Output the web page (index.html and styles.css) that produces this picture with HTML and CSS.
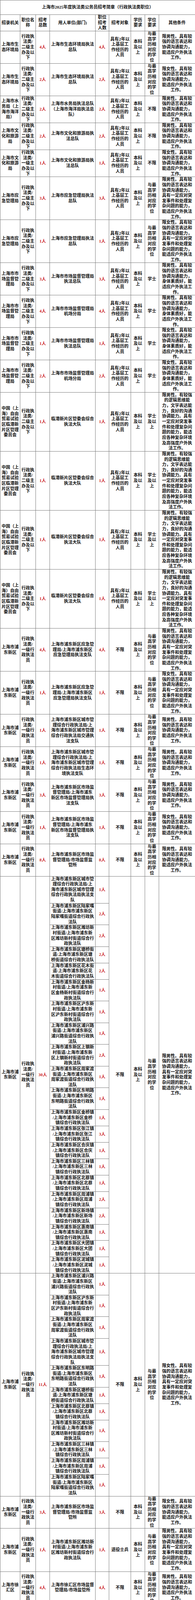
FILE: index.html
```html
<!DOCTYPE html>
<html lang="zh-CN">
<head>
<meta charset="utf-8">
<title>上海市2025年度执法类公务员招考简章（行政执法类职位）</title>
<link rel="stylesheet" href="styles.css">
</head>
<body>
<table class="sheet">
<colgroup>
<col class="c1"><col class="c2"><col class="c3"><col class="c4"><col class="c5"><col class="c6"><col class="c7"><col class="c8"><col class="c9">
</colgroup>
<tbody>
<tr class="title"><td colspan="9">上海市2025年度执法类公务员招考简章（行政执法类职位）</td></tr>
<tr><td>招录机关</td><td>职位名<br>称</td><td>招考<br>总数</td><td>用人单位(部门)</td><td>职位<br>招考<br>人数</td><td>招考对象</td><td>学历<br>要求</td><td>学位<br>要求</td><td>其他条件</td></tr>

<tr><td>上海市生<br>态环境局</td><td>行政执<br>法类/<br>二级主<br>办及以<br>下</td><td class="n">4人</td><td>上海市生态环境局执法<br>总队</td><td class="n">4人</td><td>具有2年以<br>上基层工<br>作经历的<br>人员</td><td>本科<br>及以<br>上</td><td>与最<br>高学<br>历相<br>对应<br>的学<br>位</td><td>限男性。具有较<br>强的语言表达和<br>协调沟通能力，<br>能适应户外执法<br>工作。</td></tr>

<tr><td>上海市生<br>态环境局</td><td>行政执<br>法类/<br>二级主<br>办及以<br>下</td><td class="n">2人</td><td>上海市生态环境局执法<br>总队</td><td class="n">2人</td><td>具有2年以<br>上基层工<br>作经历的<br>人员</td><td>本科<br>及以<br>上</td><td>与最<br>高学<br>历相<br>对应<br>的学<br>位</td><td>限女性。具有较<br>强的语言表达和<br>协调沟通能力，<br>能适应户外执法<br>工作。</td></tr>

<tr><td>上海市水<br>务局（上<br>海市海洋<br>局）</td><td>行政执<br>法类/<br>二级主<br>办及以<br>下</td><td class="n">2人</td><td>上海市水务局执法总队<br>（上海市海洋局执法总<br>队）</td><td class="n">2人</td><td>具有2年以<br>上基层工<br>作经历的<br>人员</td><td>本科<br>及以<br>上</td><td>不限</td><td>限男性。具有较<br>强的语言表达和<br>协调沟通能力，<br>能适应户外执法<br>工作。</td></tr>

<tr><td>上海市文<br>化和旅游<br>局</td><td>行政执<br>法类/<br>二级主<br>办及以<br>下</td><td class="n">2人</td><td>上海市文化和旅游局执<br>法总队</td><td class="n">2人</td><td>具有2年以<br>上基层工<br>作经历的<br>人员</td><td>本科<br>及以<br>上</td><td>不限</td><td>限男性。具有较<br>强的语言表达和<br>协调沟通能力，<br>能适应户外执法<br>工作。</td></tr>

<tr><td>上海市文<br>化和旅游<br>局</td><td>行政执<br>法类/<br>一级主<br>办及以<br>下</td><td class="n">1人</td><td>上海市文化和旅游局执<br>法总队</td><td class="n">1人</td><td>具有2年以<br>上基层工<br>作经历的<br>人员</td><td>本科<br>及以<br>上</td><td>不限</td><td>限女性。具有较<br>强的语言表达和<br>协调沟通能力，<br>能适应户外执法<br>工作。</td></tr>

<tr><td>上海市应<br>急管理局</td><td>行政执<br>法类/<br>二级主<br>办及以<br>下</td><td class="n">3人</td><td>上海市应急管理局执法<br>总队</td><td class="n">3人</td><td>具有2年以<br>上基层工<br>作经历的<br>人员</td><td>本科<br>及以<br>上</td><td>与最<br>高学<br>历相<br>对应<br>的学<br>位</td><td>限男性。具有较<br>强的语言表达和<br>协调沟通能力，<br>具有一定应对突<br>发事件和处理复<br>杂问题的能力，<br>能适应户外执法<br>工作。</td></tr>

<tr><td>上海市应<br>急管理局</td><td>行政执<br>法类/<br>二级主<br>办及以<br>下</td><td class="n">1人</td><td>上海市应急管理局执法<br>总队</td><td class="n">1人</td><td>具有2年以<br>上基层工<br>作经历的<br>人员</td><td>本科<br>及以<br>上</td><td>与最<br>高学<br>历相<br>对应<br>的学<br>位</td><td>限女性。具有较<br>强的语言表达和<br>协调沟通能力，<br>具有一定应对突<br>发事件和处理复<br>杂问题的能力，<br>能适应户外执法<br>工作。</td></tr>

<tr><td>上海市市<br>场监督管<br>理局</td><td>行政执<br>法类/<br>二级主<br>办及以<br>下</td><td class="n">3人</td><td>上海市市场监督管理局<br>执法总队</td><td class="n">3人</td><td>具有2年以<br>上基层工<br>作经历的<br>人员</td><td>本科<br>及以<br>上</td><td>学士</td><td>限男性。具有较<br>强的语言表达和<br>协调沟通能力，<br>身体素质好，能<br>适应户外执法工<br>作。</td></tr>

<tr><td>上海市市<br>场监督管<br>理局</td><td>行政执<br>法类/<br>二级主<br>办及以<br>下</td><td class="n">4人</td><td>上海市市场监督管理局<br>机场分局</td><td class="n">4人</td><td>具有2年以<br>上基层工<br>作经历的<br>人员</td><td>本科<br>及以<br>上</td><td>学士</td><td>限男性。具有较<br>强的语言表达和<br>协调沟通能力，<br>身体素质好，能<br>适应户外执法工<br>作。</td></tr>

<tr><td>上海市市<br>场监督管<br>理局</td><td>行政执<br>法类/<br>二级主<br>办及以<br>下</td><td class="n">1人</td><td>上海市市场监督管理局<br>执法总队</td><td class="n">1人</td><td>具有2年以<br>上基层工<br>作经历的<br>人员</td><td>本科<br>及以<br>上</td><td>学士</td><td>限女性。具有较<br>强的语言表达和<br>协调沟通能力，<br>身体素质好，能<br>适应户外执法工<br>作。</td></tr>

<tr><td>上海市市<br>场监督管<br>理局</td><td>行政执<br>法类/<br>二级主<br>办及以<br>下</td><td class="n">2人</td><td>上海市市场监督管理局<br>机场分局</td><td class="n">2人</td><td>具有2年以<br>上基层工<br>作经历的<br>人员</td><td>本科<br>及以<br>上</td><td>学士</td><td>限女性。具有较<br>强的语言表达和<br>协调沟通能力，<br>身体素质好，能<br>适应户外执法工<br>作。</td></tr>

<tr><td>中国（上<br>海）自由<br>贸易试验<br>区临港新<br>片区管理<br>委员会</td><td>行政执<br>法类/<br>二级主<br>办及以<br>下</td><td class="n">1人</td><td>临港新片区管委会综合<br>执法大队</td><td class="n">1人</td><td>具有2年以<br>上基层工<br>作经历的<br>人员</td><td>本科<br>及以<br>上</td><td>学士<br>及以<br>上</td><td>限男性。有较强<br>的逻辑思维能<br>力，文字表达能<br>力，良好的沟通<br>协调能力。具有<br>一定应对突发事<br>件和处理复杂问<br>题的能力，能适<br>应各种复杂环境<br>及高强度户外执<br>法工作。</td></tr>

<tr><td>中国（上<br>海）自由<br>贸易试验<br>区临港新<br>片区管理<br>委员会</td><td>行政执<br>法类/<br>二级主<br>办及以<br>下</td><td class="n">1人</td><td>临港新片区管委会综合<br>执法大队</td><td class="n">1人</td><td>具有2年以<br>上基层工<br>作经历的<br>人员</td><td>本科<br>及以<br>上</td><td>学士<br>及以<br>上</td><td>限男性。有较强<br>的逻辑思维能<br>力，文字表达能<br>力，良好的沟通<br>协调能力。具有<br>一定应对突发事<br>件和处理复杂问<br>题的能力，能适<br>应各种复杂环境<br>及高强度户外执<br>法工作。</td></tr>

<tr><td>中国（上<br>海）自由<br>贸易试验<br>区临港新<br>片区管理<br>委员会</td><td>行政执<br>法类/<br>二级主<br>办及以<br>下</td><td class="n">1人</td><td>临港新片区管委会综合<br>执法大队</td><td class="n">1人</td><td>具有2年以<br>上基层工<br>作经历的<br>人员</td><td>本科<br>及以<br>上</td><td>学士<br>及以<br>上</td><td>限男性。有较强<br>的逻辑思维能<br>力，文字表达能<br>力，良好的沟通<br>协调能力。具有<br>一定应对突发事<br>件和处理复杂问<br>题的能力，能适<br>应各种复杂环境<br>及高强度户外执<br>法工作。</td></tr>

<tr><td>中国（上<br>海）自由<br>贸易试验<br>区临港新<br>片区管理<br>委员会</td><td>行政执<br>法类/<br>二级主<br>办及以<br>下</td><td class="n">1人</td><td>临港新片区管委会综合<br>执法大队</td><td class="n">1人</td><td>具有2年以<br>上基层工<br>作经历的<br>人员</td><td>本科<br>及以<br>上</td><td>学士<br>及以<br>上</td><td>限男性。有较强<br>的逻辑思维能<br>力，文字表达能<br>力，良好的沟通<br>协调能力。具有<br>一定应对突发事<br>件和处理复杂问<br>题的能力，能适<br>应各种复杂环境<br>及高强度户外执<br>法工作。</td></tr>

<tr><td>上海市浦<br>东新区</td><td>行政执<br>法类/<br>一级行<br>政执法<br>员</td><td class="n">4人</td><td>上海市浦东新区应急管<br>理局/上海市浦东新区<br>应急管理局执法支队</td><td class="n">4人</td><td>不限</td><td>本科<br>及以<br>上</td><td>与最<br>高学<br>历相<br>对应<br>的学<br>位</td><td>限男性。具有较<br>强的语言表达和<br>协调沟通能力，<br>具有一定应对突<br>发事件和处理复<br>杂问题的能力，<br>能适应户外执法<br>工作。</td></tr>

<tr><td>上海市浦<br>东新区</td><td>行政执<br>法类/<br>一级行<br>政执法<br>员</td><td class="n">1人</td><td>上海市浦东新区应急管<br>理局/上海市浦东新区<br>应急管理局执法支队</td><td class="n">1人</td><td>不限</td><td>本科<br>及以<br>上</td><td>与最<br>高学<br>历相<br>对应<br>的学<br>位</td><td>限女性。具有较<br>强的语言表达和<br>协调沟通能力，<br>具有一定应对突<br>发事件和处理复<br>杂问题的能力，<br>能适应户外执法<br>工作。</td></tr>

<tr><td>上海市浦<br>东新区</td><td>行政执<br>法类/<br>一级行<br>政执法<br>员</td><td class="n">1人</td><td>上海市浦东新区城市管<br>理综合行政执法局/上<br>海市浦东新区城市管理<br>综合行政执法局交通执<br>法支队</td><td class="n">1人</td><td>不限</td><td>本科<br>及以<br>上</td><td>与最<br>高学<br>历相<br>对应<br>的学<br>位</td><td>限男性。具有较<br>强的语言表达和<br>协调沟通能力，<br>能适应户外执法<br>工作。</td></tr>

<tr><td>上海市浦<br>东新区</td><td>行政执<br>法类/<br>一级行<br>政执法<br>员</td><td class="n">1人</td><td>上海市浦东新区城市管<br>理综合行政执法局/上<br>海市浦东新区城市管理<br>综合行政执法局生态环<br>境执法支队</td><td class="n">1人</td><td>不限</td><td>本科<br>及以<br>上</td><td>与最<br>高学<br>历相<br>对应<br>的学<br>位</td><td>限男性。具有较<br>强的语言表达和<br>协调沟通能力，<br>能适应户外执法<br>工作。</td></tr>

<tr><td>上海市浦<br>东新区</td><td>行政执<br>法类/<br>一级行<br>政执法<br>员</td><td class="n">3人</td><td>上海市浦东新区市场监<br>督管理局/上海市浦东<br>新区市场监督管理局执<br>法支队</td><td class="n">3人</td><td>不限</td><td>本科<br>及以<br>上</td><td>与最<br>高学<br>历相<br>对应<br>的学<br>位</td><td>限男性。具有较<br>强的语言表达和<br>协调沟通能力。<br>能适应户外执法<br>工作。</td></tr>

<tr><td>上海市浦<br>东新区</td><td>行政执<br>法类/<br>一级行<br>政执法<br>员</td><td class="n">1人</td><td>上海市浦东新区市场监<br>督管理局/上海市浦东<br>新区市场监督管理局执<br>法支队</td><td class="n">1人</td><td>不限</td><td>本科<br>及以<br>上</td><td>与最<br>高学<br>历相<br>对应<br>的学<br>位</td><td>限女性。具有较<br>强的语言表达和<br>协调沟通能力。<br>能适应户外执法<br>工作。</td></tr>

<tr><td>上海市浦<br>东新区</td><td>行政执<br>法类/<br>一级行<br>政执法<br>员</td><td class="n">8人</td><td>上海市浦东新区市场监<br>督管理局/市场监督监<br>管所</td><td class="n">8人</td><td>不限</td><td>本科<br>及以<br>上</td><td>与最<br>高学<br>历相<br>对应<br>的学<br>位</td><td>限男性。具有较<br>强的语言表达和<br>协调沟通能力。<br>能适应户外执法<br>工作。</td></tr>

<tr><td rowspan="21">上海市浦<br>东新区</td><td rowspan="21">行政执<br>法类/<br>一级行<br>政执法<br>员</td><td rowspan="21" class="n">30人</td><td>上海市浦东新区城市管<br>理综合行政执法局/上<br>海市浦东新区城市管理<br>综合行政执法局执法支<br>队</td><td class="n">1人</td><td rowspan="21">不限</td><td rowspan="21">本科<br>及以<br>上</td><td rowspan="21">与最<br>高学<br>历相<br>对应<br>的学<br>位</td><td rowspan="21">限男性。具有较<br>强的语言表达和<br>协调沟通能力，<br>具有一定应对突<br>发事件和处理复<br>杂问题的能力，<br>能适应户外执法<br>工作。</td></tr>
<tr><td>上海市浦东新区陆家嘴<br>街道/上海市浦东新区<br>陆家嘴街道综合行政执<br>法队</td><td class="n">2人</td></tr>
<tr><td>上海市浦东新区潍坊新<br>村街道/上海市浦东新<br>区潍坊新村街道综合行<br>政执法队</td><td class="n">2人</td></tr>
<tr><td>上海市浦东新区塘桥街<br>道/上海市浦东新区塘<br>桥街道综合行政执法队</td><td class="n">2人</td></tr>
<tr><td>上海市浦东新区花木街<br>道/上海市浦东新区花<br>木街道综合行政执法队</td><td class="n">2人</td></tr>
<tr><td>上海市浦东新区金杨新<br>村街道/上海市浦东新<br>区金杨新村街道综合行<br>政执法队</td><td class="n">1人</td></tr>
<tr><td>上海市浦东新区沪东新<br>村街道/上海市浦东新<br>区沪东新村街道综合行<br>政执法队</td><td class="n">1人</td></tr>
<tr><td>上海市浦东新区浦兴路<br>街道/上海市浦东新区<br>浦兴路街道综合行政执<br>法队</td><td class="n">1人</td></tr>
<tr><td>上海市浦东新区上钢新<br>村街道/上海市浦东新<br>区上钢新村街道综合行<br>政执法队</td><td class="n">2人</td></tr>
<tr><td>上海市浦东新区周家渡<br>街道/上海市浦东新区<br>周家渡街道综合行政执<br>法队</td><td class="n">1人</td></tr>
<tr><td>上海市浦东新区东明路<br>街道/上海市浦东新区<br>东明路街道综合行政执<br>法队</td><td class="n">1人</td></tr>
<tr><td>上海市浦东新区金桥镇<br>/上海市浦东新区金桥<br>镇综合行政执法队</td><td class="n">1人</td></tr>
<tr><td>上海市浦东新区张江镇<br>/上海市浦东新区张江<br>镇综合行政执法队</td><td class="n">3人</td></tr>
<tr><td>上海市浦东新区合庆镇<br>/上海市浦东新区合庆<br>镇综合行政执法队</td><td class="n">1人</td></tr>
<tr><td>上海市浦东新区三林镇<br>/上海市浦东新区三林<br>镇综合行政执法队</td><td class="n">1人</td></tr>
<tr><td>上海市浦东新区北蔡镇<br>/上海市浦东新区北蔡<br>镇综合行政执法队</td><td class="n">1人</td></tr>
<tr><td>上海市浦东新区周浦镇<br>/上海市浦东新区周浦<br>镇综合行政执法队</td><td class="n">2人</td></tr>
<tr><td>上海市浦东新区新场镇<br>/上海市浦东新区新场<br>镇综合行政执法队</td><td class="n">2人</td></tr>
<tr><td>上海市浦东新区惠南镇<br>/上海市浦东新区惠南<br>镇综合行政执法队</td><td class="n">1人</td></tr>
<tr><td>上海市浦东新区大团镇<br>/上海市浦东新区大团<br>镇综合行政执法队</td><td class="n">1人</td></tr>
<tr><td>上海市浦东新区泥城镇<br>/上海市浦东新区泥城<br>镇综合行政执法队</td><td class="n">1人</td></tr>

<tr><td rowspan="11">上海市浦<br>东新区</td><td rowspan="11">行政执<br>法类/<br>一级行<br>政执法<br>员</td><td rowspan="11" class="n">11人</td><td>上海市浦东新区浦兴路<br>街道/上海市浦东新区<br>浦兴路街道综合行政执<br>法队</td><td class="n">1人</td><td rowspan="11">不限</td><td rowspan="11">本科<br>及以<br>上</td><td rowspan="11">与最<br>高学<br>历相<br>对应<br>的学<br>位</td><td rowspan="11">限女性。具有较<br>强的语言表达和<br>协调沟通能力，<br>具有一定应对突<br>发事件和处理复<br>杂问题的能力，<br>能适应户外执法<br>工作。</td></tr>
<tr><td>上海市浦东新区沪东新<br>村街道/上海市浦东新<br>区沪东新村街道综合行<br>政执法队</td><td class="n">1人</td></tr>
<tr><td>上海市浦东新区周家渡<br>街道/上海市浦东新区<br>周家渡街道综合行政执<br>法队</td><td class="n">1人</td></tr>
<tr><td>上海市浦东新区城市管<br>理综合行政执法局/上<br>海市浦东新区城市管理<br>综合行政执法局执法支<br>队</td><td class="n">1人</td></tr>
<tr><td>上海市浦东新区东明路<br>街道/上海市浦东新区<br>东明路街道综合行政执<br>法队</td><td class="n">1人</td></tr>
<tr><td>上海市浦东新区塘桥街<br>道/上海市浦东新区塘<br>桥街道综合行政执法队</td><td class="n">1人</td></tr>
<tr><td>上海市浦东新区北蔡镇<br>/上海市浦东新区北蔡<br>镇综合行政执法队</td><td class="n">1人</td></tr>
<tr><td>上海市浦东新区潍坊新<br>村街道/上海市浦东新<br>区潍坊新村街道综合行<br>政执法队</td><td class="n">1人</td></tr>
<tr><td>上海市浦东新区三林镇<br>/上海市浦东新区三林<br>镇综合行政执法队</td><td class="n">1人</td></tr>
<tr><td>上海市浦东新区周浦镇<br>/上海市浦东新区周浦<br>镇综合行政执法队</td><td class="n">1人</td></tr>
<tr><td>上海市浦东新区陆家嘴<br>街道/上海市浦东新区<br>陆家嘴街道综合行政执<br>法队</td><td class="n">1人</td></tr>

<tr><td>上海市浦<br>东新区</td><td>行政执<br>法类/<br>一级行<br>政执法<br>员</td><td class="n">3人</td><td>上海市浦东新区市场监<br>督管理局/市场监督监<br>管所</td><td class="n">3人</td><td>不限</td><td>本科<br>及以<br>上</td><td>与最<br>高学<br>历相<br>对应<br>的学<br>位</td><td>限女性。具有较<br>强的语言表达和<br>协调沟通能力。<br>能适应户外执法<br>工作。</td></tr>

<tr><td>上海市浦<br>东新区</td><td>行政执<br>法类/<br>一级行<br>政执法<br>员</td><td class="n">1人</td><td>上海市浦东新区潍坊新<br>村街道/上海市浦东新<br>区潍坊新村街道综合行<br>政执法队</td><td class="n">1人</td><td>退役士兵</td><td>本科<br>及以<br>上</td><td>与最<br>高学<br>历相<br>对应<br>的学<br>位</td><td>限男性。具有较<br>强的语言表达和<br>协调沟通能力，<br>具有一定应对突<br>发事件和处理复<br>杂问题的能力，<br>能适应户外执法<br>工作。</td></tr>

<tr><td>上海市徐<br>汇区</td><td>行政执<br>法类/<br>一级行<br>政执法<br>员</td><td class="n">4人</td><td>上海市徐汇区市场监督<br>管理局/市场监管所</td><td class="n">4人</td><td>不限</td><td>本科<br>及以<br>上</td><td>与最<br>高学<br>历相<br>对应<br>的学<br>位</td><td>限男性。具有较<br>强的语言表达和<br>协调沟通能力，<br>能适应户外执法<br>工作。</td></tr>

<tr><td>上海市徐<br>汇区</td><td>行政执<br>法类/<br>一级行<br>政执法<br>员</td><td class="n">1人</td><td>上海市徐汇区市场监督<br>管理局/市场监管所</td><td class="n">1人</td><td>不限</td><td>本科<br>及以<br>上</td><td>与最<br>高学<br>历相<br>对应<br>的学<br>位</td><td>限女性。具有较<br>强的语言表达和<br>协调沟通能力，<br>能适应户外执法<br>工作。</td></tr>
</tbody>
</table>
</body>
</html>
```

FILE: styles.css
```css
html, body {
  margin: 0;
  padding: 0;
  background: #ffffff;
}

body {
  width: 500px;
}

.sheet {
  width: 500px;
  border-collapse: collapse;
  table-layout: fixed;
  font-family: "Liberation Serif", "Noto Sans CJK SC", serif;
  font-size: 11px;
  font-weight: 700;
  line-height: 13.64px;
  color: #111111;
}

.sheet td {
  border: 1px solid #7d7d7d;
  padding: 0;
  text-align: center;
  vertical-align: middle;
  white-space: nowrap;
  overflow: visible;
}

.c1 { width: 51px; }
.c2 { width: 40px; }
.c3 { width: 36px; }
.c4 { width: 117px; }
.c5 { width: 35px; }
.c6 { width: 56px; }
.c7 { width: 36px; }
.c8 { width: 36px; }
.c9 { width: 93px; }

.title td {
  height: 36px;
}

.sheet td.n {
  color: #cc1f28;
}
```
